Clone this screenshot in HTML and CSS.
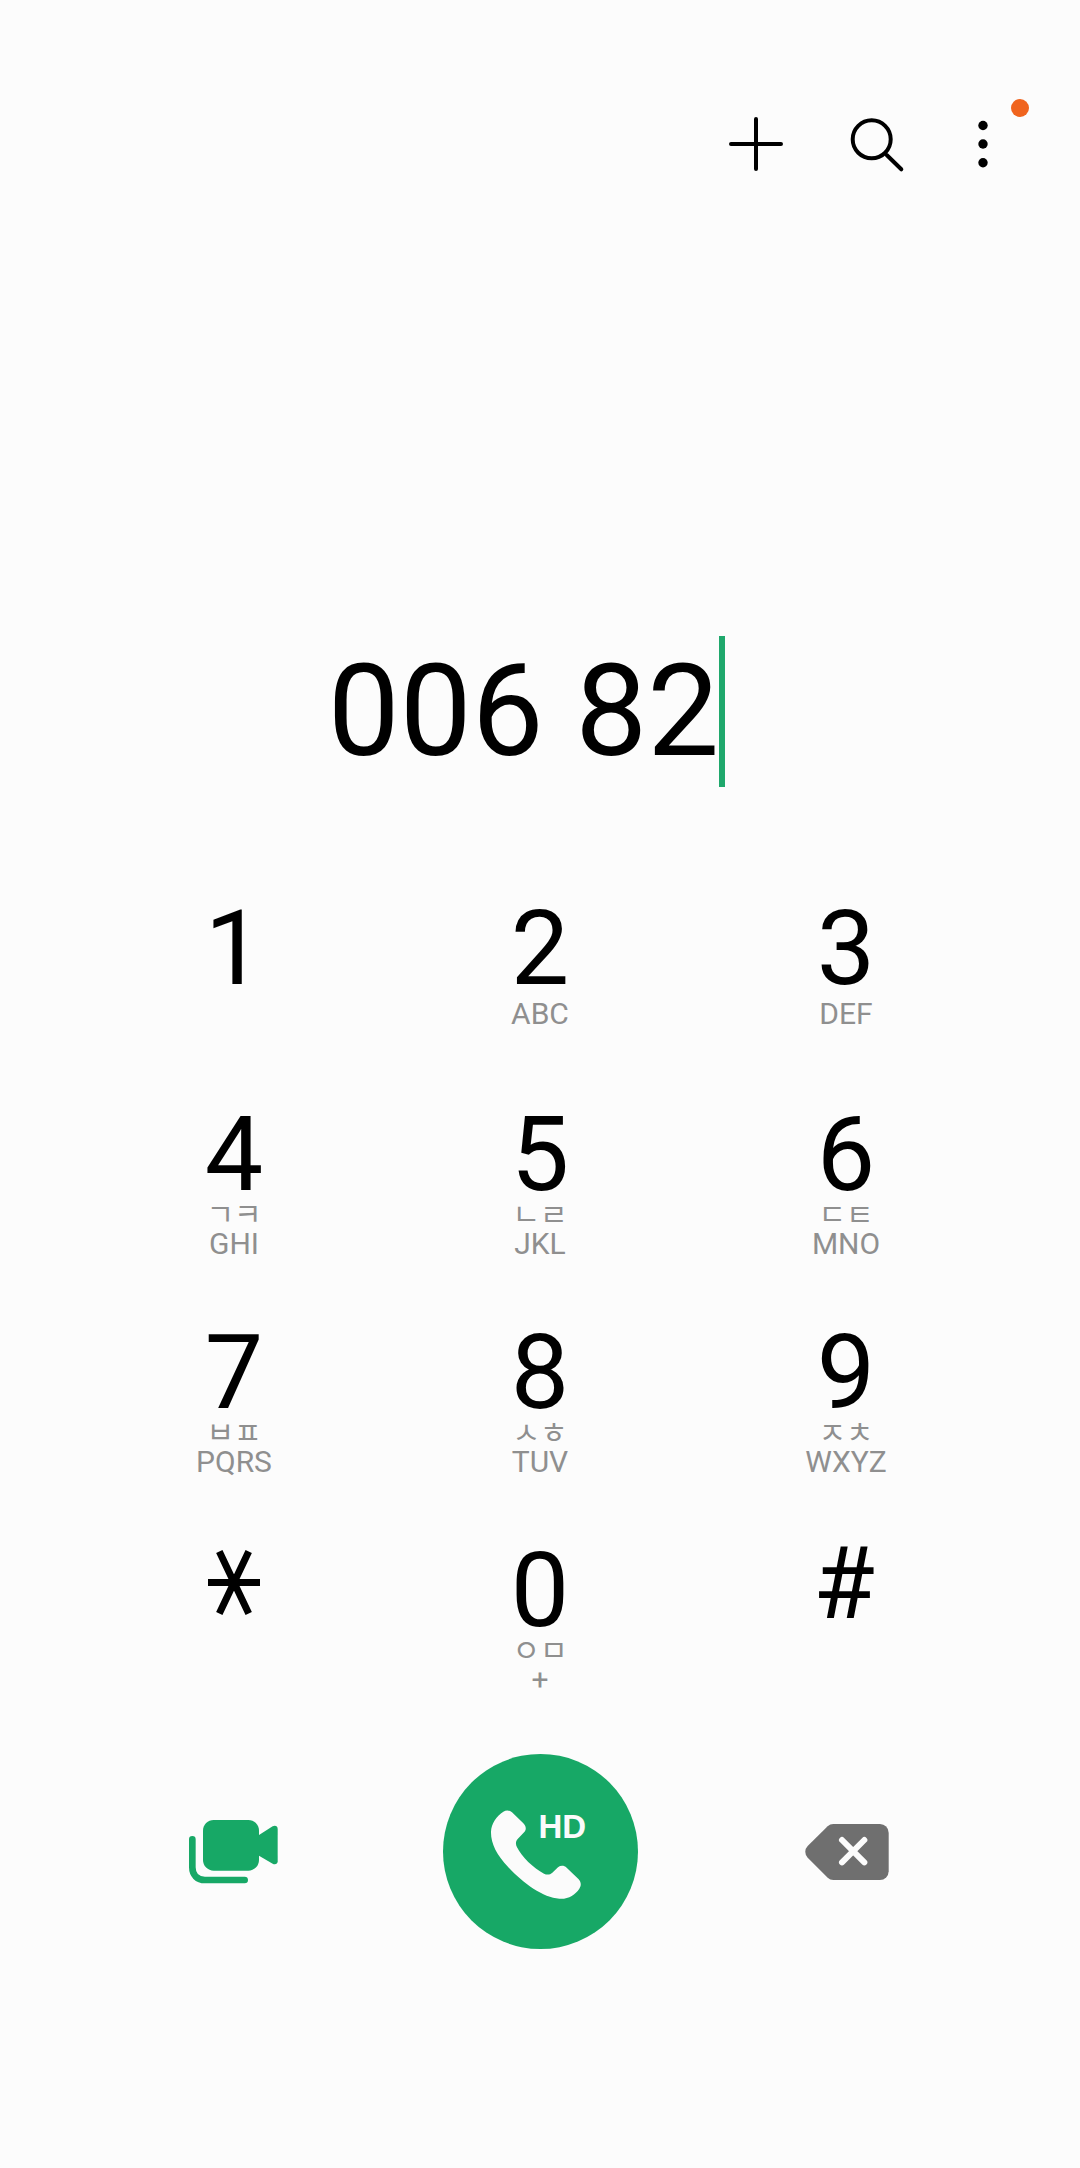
FILE: index.html
```html
<!DOCTYPE html>
<html lang="ko">
<head>
    <meta charset="UTF-8">
    <meta name="viewport" content="width=device-width, initial-scale=1.0">
    <title>Phone</title>
    <link rel="stylesheet" href="styles.css">
</head>
<body>
    <div class="container">
        <!-- Top actions -->
        <div class="actions">
            <button class="action action-add" aria-label="Add">
                <svg viewBox="0 0 60 60" width="60" height="60"><path d="M30 5V55M5 30H55" fill="none" stroke="#000" stroke-width="4" stroke-linecap="round"/></svg>
            </button>
            <button class="action action-search" aria-label="Search">
                <svg viewBox="0 0 60 60" width="60" height="60"><circle cx="25.7" cy="25.3" r="19" fill="none" stroke="#000" stroke-width="4"/><path d="M40.7 41L55.3 55.3" fill="none" stroke="#000" stroke-width="4" stroke-linecap="round"/></svg>
            </button>
            <button class="action action-more" aria-label="More">
                <svg viewBox="0 0 60 60" width="60" height="60"><circle cx="30" cy="11.5" r="4.7"/><circle cx="30" cy="30" r="4.7"/><circle cx="30" cy="48.7" r="4.7"/></svg>
                <span class="badge"></span>
            </button>
        </div>

        <!-- Dialled number -->
        <div class="number">
            <span class="number-text">006 82</span>
            <span class="caret"></span>
        </div>

        <!-- Keypad -->
        <div class="keypad">
            <div class="key"><span class="digit">1</span></div>
            <div class="key"><span class="digit">2</span><span class="letters">ABC</span></div>
            <div class="key"><span class="digit">3</span><span class="letters">DEF</span></div>

            <div class="key"><span class="digit">4</span><span class="hangul">ㄱㅋ</span><span class="letters">GHI</span></div>
            <div class="key"><span class="digit">5</span><span class="hangul">ㄴㄹ</span><span class="letters">JKL</span></div>
            <div class="key"><span class="digit">6</span><span class="hangul">ㄷㅌ</span><span class="letters">MNO</span></div>

            <div class="key"><span class="digit">7</span><span class="hangul">ㅂㅍ</span><span class="letters">PQRS</span></div>
            <div class="key"><span class="digit">8</span><span class="hangul">ㅅㅎ</span><span class="letters">TUV</span></div>
            <div class="key"><span class="digit">9</span><span class="hangul">ㅈㅊ</span><span class="letters">WXYZ</span></div>

            <div class="key">
                <svg class="star" viewBox="0 0 60 70" width="60" height="70" aria-label="*"><path d="M4 33.5H56M15.3 2.5L44.7 64.5M44.7 2.5L15.3 64.5" fill="none" stroke="#000" stroke-width="7"/></svg>
            </div>
            <div class="key"><span class="digit">0</span><span class="hangul">ㅇㅁ</span><span class="letters">+</span></div>
            <div class="key"><span class="digit digit-hash">#</span></div>
        </div>

        <!-- Call row -->
        <div class="call-row">
            <button class="side-btn" aria-label="Video call">
                <svg viewBox="0 0 330 270" width="110" height="90">
                    <path d="M40 88V172C40 195 55 210 78 210H197" fill="none" stroke="#17a866" stroke-width="20" stroke-linecap="round"/>
                    <rect x="72" y="30" width="168" height="152" rx="32" fill="#17a866"/>
                    <path d="M240 75L281 49C288 45 296 48 296 56V154C296 162 288 165 281 161L240 137Z" fill="#17a866"/>
                </svg>
            </button>
            <button class="call-btn" aria-label="Call">
                <svg viewBox="0 0 420 390" width="140" height="130">
                    <path d="M100 65C108 60 118 60 126 67L160 100C168 108 170 118 163 126L143 147C137 154 136 162 141 172C155 200 190 235 222 251C232 256 240 254 247 248L264 232C272 226 282 226 290 233L326 268C334 276 334 288 328 296C315 315 295 328 268 326C220 324 160 280 115 232C80 195 62 160 63 125C64 100 80 78 100 65Z" fill="#fbfbfb"/>
                </svg>
                <span class="hd">HD</span>
            </button>
            <button class="side-btn" aria-label="Delete">
                <svg viewBox="0 0 300 240" width="100" height="80">
                    <path d="M112 27H252A26 26 0 0 1 278 53V169A26 26 0 0 1 252 195H112A25 25 0 0 1 95 188L35 128A25 25 0 0 1 35 93L95 34A25 25 0 0 1 112 27Z" fill="#6f6f6f"/>
                    <path d="M138 75L205 142M205 75L138 142" fill="none" stroke="#fcfcfc" stroke-width="18" stroke-linecap="round"/>
                </svg>
            </button>
        </div>
    </div>
</body>
</html>
```

FILE: styles.css
```css
body {
    font-family: Roboto, "Noto Sans CJK KR", sans-serif;
    margin: 0;
    padding: 0;
    background-color: #fcfcfc;
    color: #000;
}

.container {
    width: 1080px;
    height: 2168px;
    overflow: hidden;
}

button {
    background: none;
    border: none;
    padding: 0;
    cursor: pointer;
}

.actions {
    display: flex;
    justify-content: flex-end;
    padding: 114px 67px 0 0;
}

.action {
    position: relative;
    width: 60px;
    height: 60px;
}

.action svg {
    display: block;
}

.action-add {
    margin-right: 60px;
}

.action-search {
    margin-right: 47px;
}

.badge {
    position: absolute;
    top: -15px;
    left: 58px;
    width: 18px;
    height: 18px;
    border-radius: 50%;
    background-color: #f0641e;
}

.number {
    display: flex;
    justify-content: center;
    height: 151px;
    margin-top: 462px;
    padding-right: 27px;
}

.number-text {
    font-size: 128px;
    line-height: 151px;
}

.caret {
    flex: none;
    width: 6px;
    height: 151px;
    background-color: #1fa86c;
}

.keypad {
    display: grid;
    grid-template-columns: repeat(3, 306px);
    grid-template-rows: 206px 218px 218px 205px;
    padding-left: 81px;
    margin-top: 120px;
}

.key {
    display: flex;
    flex-direction: column;
    align-items: center;
}

.digit {
    font-size: 104px;
    line-height: 84px;
}

.digit-hash {
    font-size: 100px;
    line-height: 70px;
    padding-right: 4px;
}

.star {
    display: block;
}

.letters {
    font-size: 30px;
    line-height: 34px;
    color: #8f8f8f;
    margin-top: 6px;
}

.hangul {
    font-family: "Noto Sans CJK KR", sans-serif;
    font-size: 30px;
    line-height: 30px;
    color: #8f8f8f;
}

.hangul + .letters {
    margin-top: 0;
}

.call-row {
    display: grid;
    grid-template-columns: repeat(3, 306px);
    padding-left: 81px;
    align-items: center;
    justify-items: center;
}

.side-btn {
    margin-top: 7px;
}

.side-btn svg {
    display: block;
}

.call-btn {
    position: relative;
    display: flex;
    align-items: center;
    justify-content: center;
    width: 195px;
    height: 195px;
    border-radius: 50%;
    background-color: #17a866;
}

.call-btn svg {
    margin-top: 7px;
}

.hd {
    position: absolute;
    top: 53px;
    left: 96px;
    font-size: 33px;
    line-height: 40px;
    font-weight: 700;
    color: #fbfbfb;
}
```
